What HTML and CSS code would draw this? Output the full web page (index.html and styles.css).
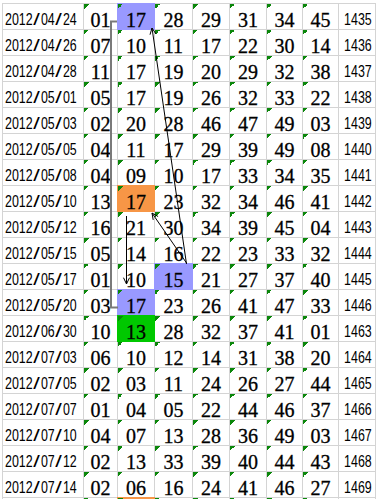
FILE: index.html
```html
<!DOCTYPE html>
<html lang="zh-Hant">
<head>
<meta charset="utf-8">
<title>Lottery sheet</title>
<link rel="stylesheet" href="styles.css">
</head>
<body>
<div class="page">
  <div class="sheet">
    <div class="date"><span class="sx">2012<i>/</i>04<i>/</i>24</span></div><div class="n">01</div><div class="n blue">17</div><div class="n">28</div><div class="n">29</div><div class="n">31</div><div class="n">34</div><div class="n">45</div><div class="id"><span class="sx">1435</span></div>
    <div class="date"><span class="sx">2012<i>/</i>04<i>/</i>26</span></div><div class="n">07</div><div class="n">10</div><div class="n">11</div><div class="n">17</div><div class="n">22</div><div class="n">30</div><div class="n">14</div><div class="id"><span class="sx">1436</span></div>
    <div class="date"><span class="sx">2012<i>/</i>04<i>/</i>28</span></div><div class="n">11</div><div class="n">17</div><div class="n">19</div><div class="n">20</div><div class="n">29</div><div class="n">32</div><div class="n">38</div><div class="id"><span class="sx">1437</span></div>
    <div class="date"><span class="sx">2012<i>/</i>05<i>/</i>01</span></div><div class="n">05</div><div class="n">17</div><div class="n">19</div><div class="n">26</div><div class="n">32</div><div class="n">33</div><div class="n">22</div><div class="id"><span class="sx">1438</span></div>
    <div class="date"><span class="sx">2012<i>/</i>05<i>/</i>03</span></div><div class="n">02</div><div class="n">20</div><div class="n">28</div><div class="n">46</div><div class="n">47</div><div class="n">49</div><div class="n">03</div><div class="id"><span class="sx">1439</span></div>
    <div class="date"><span class="sx">2012<i>/</i>05<i>/</i>05</span></div><div class="n">04</div><div class="n">11</div><div class="n">17</div><div class="n">29</div><div class="n">39</div><div class="n">49</div><div class="n">08</div><div class="id"><span class="sx">1440</span></div>
    <div class="date"><span class="sx">2012<i>/</i>05<i>/</i>08</span></div><div class="n">04</div><div class="n">09</div><div class="n">10</div><div class="n">17</div><div class="n">33</div><div class="n">34</div><div class="n">35</div><div class="id"><span class="sx">1441</span></div>
    <div class="date"><span class="sx">2012<i>/</i>05<i>/</i>10</span></div><div class="n">13</div><div class="n orange">17</div><div class="n">23</div><div class="n">32</div><div class="n">34</div><div class="n">46</div><div class="n">41</div><div class="id"><span class="sx">1442</span></div>
    <div class="date"><span class="sx">2012<i>/</i>05<i>/</i>12</span></div><div class="n">16</div><div class="n">21</div><div class="n">30</div><div class="n">34</div><div class="n">39</div><div class="n">45</div><div class="n">04</div><div class="id"><span class="sx">1443</span></div>
    <div class="date"><span class="sx">2012<i>/</i>05<i>/</i>15</span></div><div class="n">05</div><div class="n">14</div><div class="n">16</div><div class="n">22</div><div class="n">23</div><div class="n">33</div><div class="n">32</div><div class="id"><span class="sx">1444</span></div>
    <div class="date"><span class="sx">2012<i>/</i>05<i>/</i>17</span></div><div class="n">01</div><div class="n">10</div><div class="n blue">15</div><div class="n">21</div><div class="n">27</div><div class="n">37</div><div class="n">40</div><div class="id"><span class="sx">1445</span></div>
    <div class="date"><span class="sx">2012<i>/</i>05<i>/</i>20</span></div><div class="n">03</div><div class="n blue">17</div><div class="n">23</div><div class="n">26</div><div class="n">41</div><div class="n">47</div><div class="n">33</div><div class="id"><span class="sx">1446</span></div>
    <div class="date"><span class="sx">2012<i>/</i>06<i>/</i>30</span></div><div class="n">10</div><div class="n green">13</div><div class="n">28</div><div class="n">32</div><div class="n">37</div><div class="n">41</div><div class="n">01</div><div class="id"><span class="sx">1463</span></div>
    <div class="date"><span class="sx">2012<i>/</i>07<i>/</i>03</span></div><div class="n">06</div><div class="n">10</div><div class="n">12</div><div class="n">14</div><div class="n">31</div><div class="n">38</div><div class="n">20</div><div class="id"><span class="sx">1464</span></div>
    <div class="date"><span class="sx">2012<i>/</i>07<i>/</i>05</span></div><div class="n">02</div><div class="n">03</div><div class="n">11</div><div class="n">24</div><div class="n">26</div><div class="n">27</div><div class="n">44</div><div class="id"><span class="sx">1465</span></div>
    <div class="date"><span class="sx">2012<i>/</i>07<i>/</i>07</span></div><div class="n">01</div><div class="n">04</div><div class="n">05</div><div class="n">22</div><div class="n">44</div><div class="n">46</div><div class="n">37</div><div class="id"><span class="sx">1466</span></div>
    <div class="date"><span class="sx">2012<i>/</i>07<i>/</i>10</span></div><div class="n">04</div><div class="n">07</div><div class="n">13</div><div class="n">28</div><div class="n">36</div><div class="n">49</div><div class="n">03</div><div class="id"><span class="sx">1467</span></div>
    <div class="date"><span class="sx">2012<i>/</i>07<i>/</i>12</span></div><div class="n">02</div><div class="n">13</div><div class="n">33</div><div class="n">39</div><div class="n">40</div><div class="n">44</div><div class="n">43</div><div class="id"><span class="sx">1468</span></div>
    <div class="date"><span class="sx">2012<i>/</i>07<i>/</i>14</span></div><div class="n">02</div><div class="n">06</div><div class="n">16</div><div class="n">24</div><div class="n">41</div><div class="n">46</div><div class="n">27</div><div class="id"><span class="sx">1469</span></div>
    <div class="date"></div><div class="n"></div><div class="n orange"></div><div class="n"></div><div class="n"></div><div class="n"></div><div class="n"></div><div class="n"></div><div class="id"></div>
  </div>
  <svg class="overlay" width="377" height="499" viewBox="0 0 377 499" aria-hidden="true">
    <path d="M117 21.5 H111 V307.5 H118" fill="none" stroke="#7a7a7a" stroke-width="2"/>
    <g fill="none" stroke="#000" stroke-width="1">
      <path d="M186.5 264 L152 28 M150 34.7 L152 28 L155.9 33.9"/>
      <path d="M186.5 263 L152 213 M153.2 219.9 L152 213 L158.1 216.5"/>
      <path d="M126.5 216 V284 M123.5 277.7 L126.5 284 L129.5 277.7"/>
    </g>
  </svg>
</div>
</body>
</html>
```
FILE: styles.css
```css
html, body {
  margin: 0;
  padding: 0;
  background: #ffffff;
  overflow: hidden;
}

.page {
  position: relative;
  width: 377px;
  height: 499px;
  overflow: hidden;
}

.sheet {
  display: grid;
  grid-template-columns: 80px 33px 36px 37px 36px 36px 35px 35px 36px;
  grid-auto-rows: 25px;
  gap: 1px;
  padding: 1px;
  margin: 3px 0 0 2px;
  width: max-content;
  background: #d4d4d4;
}

.sheet > div {
  background-color: #ffffff;
  display: flex;
  align-items: flex-end;
  overflow: visible;
  white-space: nowrap;
}

.date,
.id {
  font-family: "Liberation Sans", Arial, sans-serif;
  font-size: 17px;
  line-height: 18px;
  color: #000;
}

.date {
  padding-left: 2px;
}

.id {
  justify-content: center;
  padding-left: 1px;
}

.sx {
  display: inline-block;
  transform: scaleX(0.73);
  transform-origin: left bottom;
}

.id .sx {
  transform-origin: center bottom;
}

.sx i {
  display: inline-block;
  font-style: normal;
  margin: 0 3.3px;
  transform: scaleX(1.9);
}

.n {
  font-family: "Liberation Serif", "Times New Roman", serif;
  font-size: 20px;
  line-height: 18px;
  color: #000;
  -webkit-text-stroke: 0.3px #000;
  justify-content: center;
  background-image: linear-gradient(135deg, #0b870b 50%, transparent 50%);
  background-size: 5px 5px;
  background-repeat: no-repeat;
  background-position: 0 0;
}

.sheet > .blue {
  background-color: #9999ff;
  outline: 1px solid #9999ff;
}

.sheet > .orange {
  background-color: #f79646;
  outline: 1px solid #f79646;
}

.sheet > .green {
  background-color: #00c800;
  outline: 1px solid #00c800;
}

.overlay {
  position: absolute;
  left: 0;
  top: 0;
  pointer-events: none;
}
```
